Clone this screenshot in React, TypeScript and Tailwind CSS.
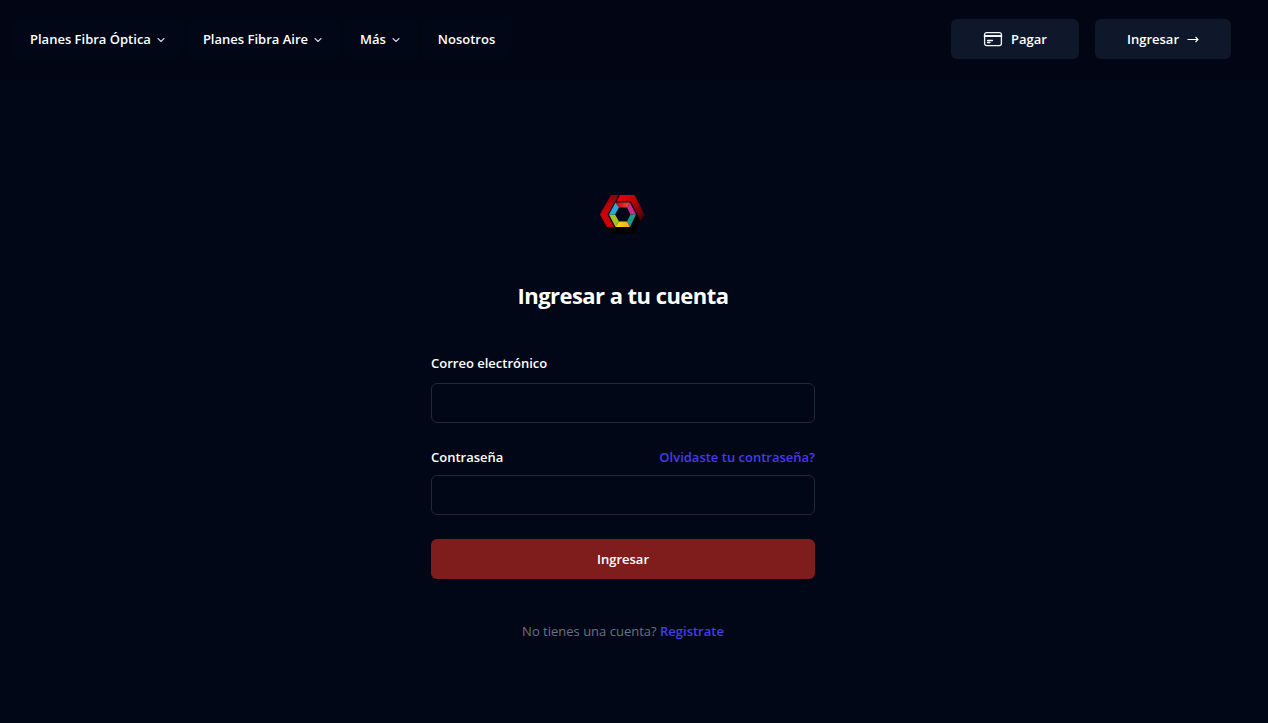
import { ReactNode } from "react";

function Chevron() {
  return (
    <svg className="mt-px h-3 w-3 text-slate-300" viewBox="0 0 12 12" fill="none" stroke="currentColor" strokeWidth="1.1" strokeLinecap="round" strokeLinejoin="round" aria-hidden="true">
      <path d="m3 4.500 3 3 3-3" />
    </svg>
  );
}

function NavItem({ children }: { children: ReactNode }) {
  return (
    <button type="button" className="flex h-10 items-center gap-1 rounded-md bg-[#010716] px-4 text-white">
      {children}
      <Chevron />
    </button>
  );
}

function CardIcon() {
  return (
    <svg className="h-[18px] w-5 text-slate-100" viewBox="0 0 20 18" fill="none" stroke="currentColor" strokeWidth="1.3" strokeLinecap="round" strokeLinejoin="round" aria-hidden="true">
      <rect x="1.6" y="2.6" width="16.8" height="13" rx="2" />
      <path d="M1.6 6h16.8" strokeWidth="1.8" />
      <path d="M4.500 10.500h5M4.500 12.500h2.500" />
    </svg>
  );
}

function Logo() {
  return (
    <svg className="h-12 w-12" viewBox="0 0 48 48" role="img" aria-label="Logo">
      <defs>
        <linearGradient id="left" x1="0" y1="0" x2="0" y2="1">
          <stop offset="0" stopColor="#8f0008" />
          <stop offset="0.5" stopColor="#c80008" />
          <stop offset="1" stopColor="#d00008" />
        </linearGradient>
        <linearGradient id="right" x1="0" y1="0" x2="1" y2="1">
          <stop offset="0" stopColor="#ee0009" />
          <stop offset="0.5" stopColor="#b00008" />
          <stop offset="1" stopColor="#300005" />
        </linearGradient>
        <linearGradient id="crown" x1="0" y1="0" x2="1" y2="0">
          <stop offset="0" stopColor="#c00008" />
          <stop offset="1" stopColor="#f2503c" />
        </linearGradient>
        <linearGradient id="base" x1="0" y1="0" x2="1" y2="0">
          <stop offset="0" stopColor="#f3e51b" />
          <stop offset="1" stopColor="#f2a51e" />
        </linearGradient>
      </defs>
      <path d="M12 4h7.5L16 10.500 8.500 23.500 15 36H8L1 23.500Z" fill="url(#left)" />
      <path d="M21 4h14.500L45.500 23.500 41.500 30 32 10.500H17.500Z" fill="url(#right)" />
      <path d="M10 37h21.500l6.500-12.500 3 6-6 12.500H13.500Z" fill="#000" />
      <path d="M16.500 11.500h14.500l-3 5h-8Z" fill="url(#crown)" />
      <path d="m31 11.500 6 12H31.500l-3.500-7Z" fill="#c92e88" />
      <path d="M37 23.500 31 36l-3-5.500 3.500-7Z" fill="#189c87" />
      <path d="M31 36H16.500l3.500-5.500h8Z" fill="url(#base)" />
      <path d="m16.500 36-6.500-12.500h6l4 7Z" fill="#a4c520" />
      <path d="M10 23.500 16.500 11.500l3.500 5-4 7Z" fill="#28a9d8" />
    </svg>
  );
}

export default function App() {
  return (
    <div className="min-h-screen bg-[#010716] pr-[22px] font-['Open_Sans','Noto_Sans',sans-serif] text-[13px] leading-6 font-semibold text-white">
      <header className="-mr-[22px] flex items-center justify-between bg-[#010514] pt-[19px] pr-[37px] pb-5 pl-[14px]">
        <nav className="flex items-center gap-1">
          <NavItem>Planes Fibra Óptica</NavItem>
          <NavItem>Planes Fibra Aire</NavItem>
          <NavItem>Más</NavItem>
          <a href="#nosotros" className="flex h-10 items-center rounded-md bg-[#010716] px-4">Nosotros</a>
        </nav>
        <div className="flex gap-4">
          <a href="#pagar" className="flex h-10 w-32 items-center justify-center gap-2 rounded-md bg-[#0f172a]">
            <CardIcon />
            Pagar
          </a>
          <a href="#ingresar" className="flex h-10 w-[136px] items-center justify-center gap-2 rounded-md bg-[#0f172a]">
            Ingresar
            <svg className="h-3 w-3" viewBox="0 0 12 12" fill="none" stroke="currentColor" strokeWidth="1.1" aria-hidden="true">
              <path d="M.5 6.500H11M8.500 4 11 6.500 8.500 9" />
            </svg>
          </a>
        </div>
      </header>
      <main className="mx-auto w-full max-w-sm pt-28">
        <div className="flex justify-center">
          <Logo />
        </div>
        <h1 className="mt-10 text-center text-[22px] leading-8 font-bold tracking-tight">Ingresar a tu cuenta</h1>
        <form className="mt-10" onSubmit={(e) => e.preventDefault()}>
          <label htmlFor="email" className="block">Correo electrónico</label>
          <input id="email" type="email" className="mt-2 block h-10 w-full rounded-md border border-gray-800 bg-transparent px-3 outline-none" />
          <div className="mt-[22px] flex justify-between">
            <label htmlFor="password">Contraseña</label>
            <a href="#recuperar" className="text-[#463bf0]">Olvidaste tu contraseña?</a>
          </div>
          <input id="password" type="password" className="mt-[6px] block h-10 w-full rounded-md border border-gray-800 bg-transparent px-3 outline-none" />
          <button type="submit" className="mt-6 h-10 w-full rounded-md bg-[#7f1d1d]">Ingresar</button>
        </form>
        <p className="mt-10 text-center font-normal text-gray-500">
          No tienes una cuenta? <a href="#registro" className="font-semibold text-[#463bf0]">Registrate</a>
        </p>
      </main>
    </div>
  );
}
